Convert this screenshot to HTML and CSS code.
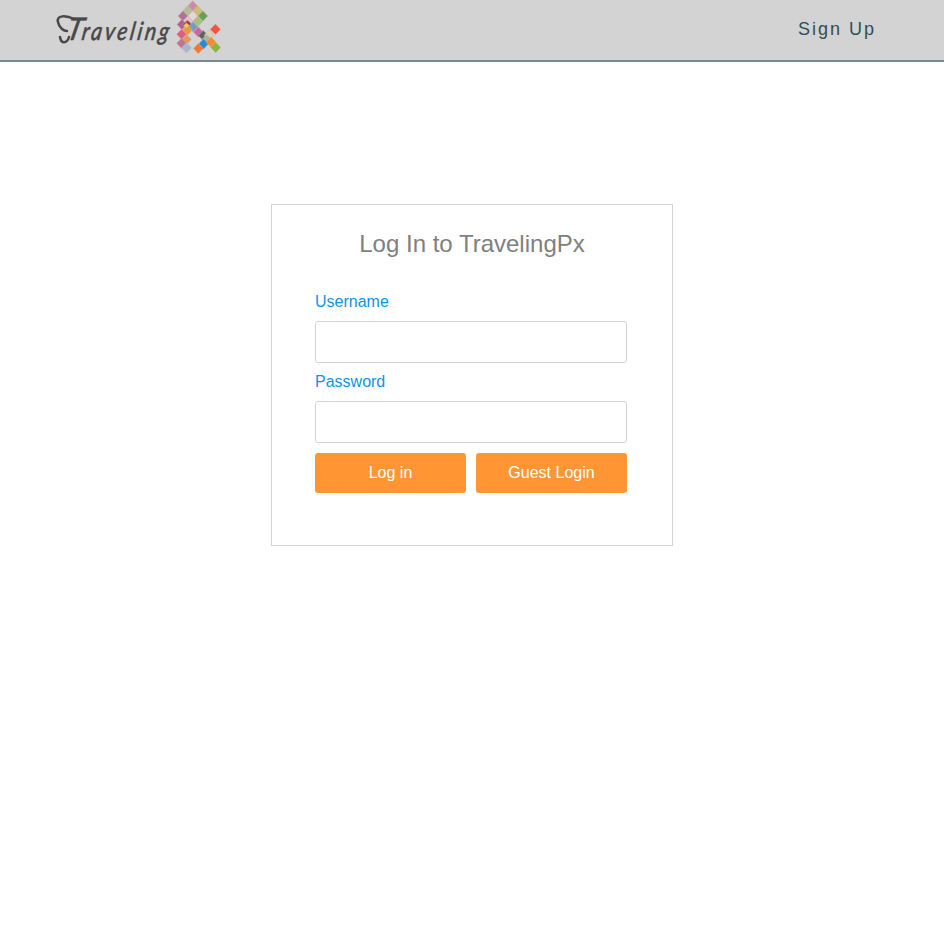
FILE: index.html
```html
<!DOCTYPE html>
<html lang="en">
<head>
<meta charset="utf-8">
<title>TravelingPx</title>
<link rel="stylesheet" href="styles.css">
</head>
<body>
<header class="topbar">
  <a class="brand" aria-label="Traveling">
    <svg class="logo" width="176" height="60" viewBox="50 0 176 60">
      <g class="wordmark">
        <text class="cap" transform="translate(65 40) skewX(-13)" textLength="16" lengthAdjust="spacingAndGlyphs">T</text>
        <text class="word" transform="translate(81 40) skewX(-9) scale(1 1.2)" textLength="87" lengthAdjust="spacing">raveling</text>
      </g>
      <path class="swash" d="M74 19C66 15 56 15 58 22C59 28 64 31 67 31M69 37C67 44 61 44 60 37"/>
      <g class="tiles" transform="translate(169 0) scale(.349)">
        <path fill="#c98bae" d="M68 2l14 15-14 15-14-15z"/>
        <path fill="#b3bd9c" d="M54 16l14 15-14 15-14-15z"/>
        <path fill="#c6c36e" d="M82 16l14 15-14 15-14-15z"/>
        <path fill="#ad7398" d="M40 31l14 15-14 15-14-15z"/>
        <path fill="#e2d6df" d="M68 31l14 15-14 15-14-15z"/>
        <path fill="#61a253" d="M97 31l14 15-14 15-14-15z"/>
        <path fill="#dcc6d2" d="M54 46l14 15-14 15-14-15z"/>
        <path fill="#a9bf83" d="M83 46l14 15-14 15-14-15z"/>
        <path fill="#b65a98" d="M37 55l14 15-14 15-14-15z"/>
        <path fill="#9d3f49" d="M53 57l14 14-14 14-14-14z"/>
        <path fill="#6f9ccb" d="M69 62l14 15-14 15-14-15z"/>
        <path fill="#e8993c" d="M53 71l14 15-14 15-14-15z"/>
        <path fill="#cc65a0" d="M84 77l14 15-14 15-14-15z"/>
        <path fill="#df5d82" d="M36 83l14 15-14 15-14-15z"/>
        <path fill="#526862" d="M98 87l14 15-14 15-14-15z"/>
        <path fill="#df9961" d="M50 98l14 15-14 15-14-15z"/>
        <path fill="#ddd2b3" d="M115 86l14 15-14 15-14-15z"/>
        <path fill="#a5b99b" d="M108 99l12 12-12 12-12-12z"/>
        <path fill="#f05440" d="M133 69l15 15-15 15-15-15z"/>
        <path fill="#bf719a" d="M36 109l14 15-14 15-14-15z"/>
        <path fill="#a1b8d2" d="M50 122l14 15-14 15-14-15z"/>
        <path fill="#258bdc" d="M99 111l14 15-14 15-14-15z"/>
        <path fill="#f58b2d" d="M121 106l14 15-14 15-14-15z"/>
        <path fill="#ef7932" d="M84 124l14 15-14 15-14-15z"/>
        <path fill="#83b83a" d="M134 121l14 15-14 15-14-15z"/>
        <path fill="#f4cf4c" d="M50 66l8 7-8 7-8-7z"/>
      </g>
    </svg>
  </a>
  <a class="signup">Sign Up</a>
</header>
<main class="page">
  <form class="card">
    <h1 class="title">Log In to TravelingPx</h1>
    <label class="label" for="user">Username</label>
    <input class="field" id="user" type="text">
    <label class="label" for="pass">Password</label>
    <input class="field" id="pass" type="password">
    <div class="actions">
      <button class="btn" type="button">Log in</button>
      <button class="btn" type="button">Guest Login</button>
    </div>
  </form>
</main>
</body>
</html>
```
FILE: styles.css
```css
* { box-sizing: border-box; }
body {
  margin: 0;
  background: #fff;
  font-family: "Liberation Sans", Arial, sans-serif;
  font-size: 16px;
}
.topbar {
  display: flex;
  justify-content: space-between;
  height: 62px;
  padding: 0 68px 0 50px;
  background: #d3d3d3;
  border-bottom: 2px solid #778899;
}
.logo { display: block; }
.wordmark { fill: #484848; stroke: #484848; stroke-width: .5; font-family: Lato, sans-serif; font-style: italic; font-weight: 400; }
.cap { font-size: 31px; }
.word { font-size: 21px; }
.swash { fill: none; stroke: #484848; stroke-width: 2.5; stroke-linecap: round; }
.tiles { stroke: #d6ab94; stroke-width: 1.5; }
.signup {
  color: #2f4f4f;
  font-size: 18px;
  line-height: 58px;
  letter-spacing: 2px;
}
.page { display: flex; justify-content: center; padding-top: 142px; }
.card {
  width: 402px;
  height: 342px;
  padding: 24px 45px 0 43px;
  border: 1px solid #d3d3d3;
}
.title {
  margin: 0 -2px 32px 0;
  color: #808080;
  font-size: 24px;
  font-weight: 400;
  line-height: 30px;
  text-align: center;
}
.label { display: block; height: 30px; color: #0f93e6; line-height: 22px; }
.field {
  display: block;
  width: 312px;
  height: 42px;
  margin: 0 0 8px;
  padding: 0 10px;
  background: #fff;
  border: 1px solid #d3d3d3;
  border-radius: 3px;
  font: inherit;
}
.actions { display: flex; gap: 10px; width: 312px; margin-top: 10px; }
.btn {
  flex: 1;
  height: 40px;
  padding: 0;
  border: 0;
  border-radius: 3px;
  background: #ff9633;
  color: #fff;
  font: inherit;
}
```
